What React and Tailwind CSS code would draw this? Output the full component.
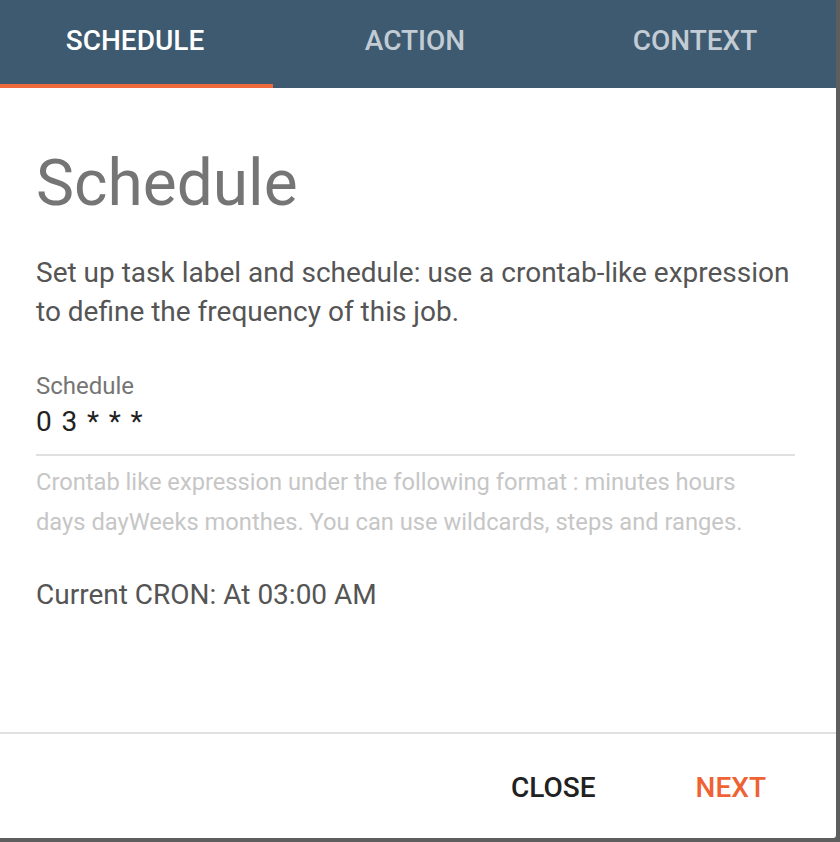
import React from "react";

const tabs = [
  { label: "SCHEDULE", active: true },
  { label: "ACTION", active: false },
  { label: "CONTEXT", active: false },
];

export default function App() {
  return (
    <div
      className="w-[840px] h-[842px] bg-[#5e5e5e] overflow-hidden"
      style={{ fontFamily: "Roboto, 'Liberation Sans', sans-serif" }}
    >
      <div className="w-[836px] h-[838px] bg-white rounded-br-[3px] flex flex-col overflow-hidden">
        {/* Tabs */}
        <div className="relative h-[88px] bg-[#3d5a70] flex shrink-0">
          <div className="flex -ml-[5px]">
            {tabs.map((t) => (
              <div
                key={t.label}
                className={`w-[280px] h-[88px] flex justify-center pt-[24px] text-[28px] leading-[34px] font-medium ${
                  t.active ? "text-white" : "text-[#c3ccd4]"
                }`}
              >
                {t.label}
              </div>
            ))}
          </div>
          <div className="absolute left-0 bottom-0 w-[273px] h-[4px] bg-[#ef6a3a]" />
        </div>

        {/* Body */}
        <div className="flex-1 pl-[36px] pr-[40px]">
          <h1 className="mt-[58px] text-[64px] leading-[76px] text-[#757575] font-normal">Schedule</h1>
          <p className="mt-[31px] text-[28px] leading-[39px] text-[#555555]">
            Set up task label and schedule: use a crontab-like expression to define the frequency of this job.
          </p>

          <div className="mt-[41px]">
            <div className="text-[24px] leading-[28px] text-[#757575]">Schedule</div>
            <div className="mt-[5px] text-[28px] leading-[34px] tracking-[1.4px] text-[#222222] pb-[15px] border-b-2 border-[#e0e0e0] w-[759px]">
              0 3 * * *
            </div>
            <p className="mt-[6px] w-[730px] text-[23.7px] leading-[40px] text-[#c6c6c6]">
              Crontab like expression under the following format : minutes hours days dayWeeks monthes. You can use wildcards, steps and ranges.
            </p>
          </div>

          <div className="mt-[36px] text-[28px] leading-[34px] text-[#555555]">Current CRON: At 03:00 AM</div>
        </div>

        {/* Footer */}
        <div className="h-[106px] border-t-2 border-[#e0e0e0] flex items-start justify-end pt-[37px] pr-[70px] gap-[100px] shrink-0">
          <button className="text-[28px] leading-[34px] font-medium text-[#212121]">CLOSE</button>
          <button className="text-[28px] leading-[34px] font-medium text-[#ef6234]">NEXT</button>
        </div>
      </div>
    </div>
  );
}
